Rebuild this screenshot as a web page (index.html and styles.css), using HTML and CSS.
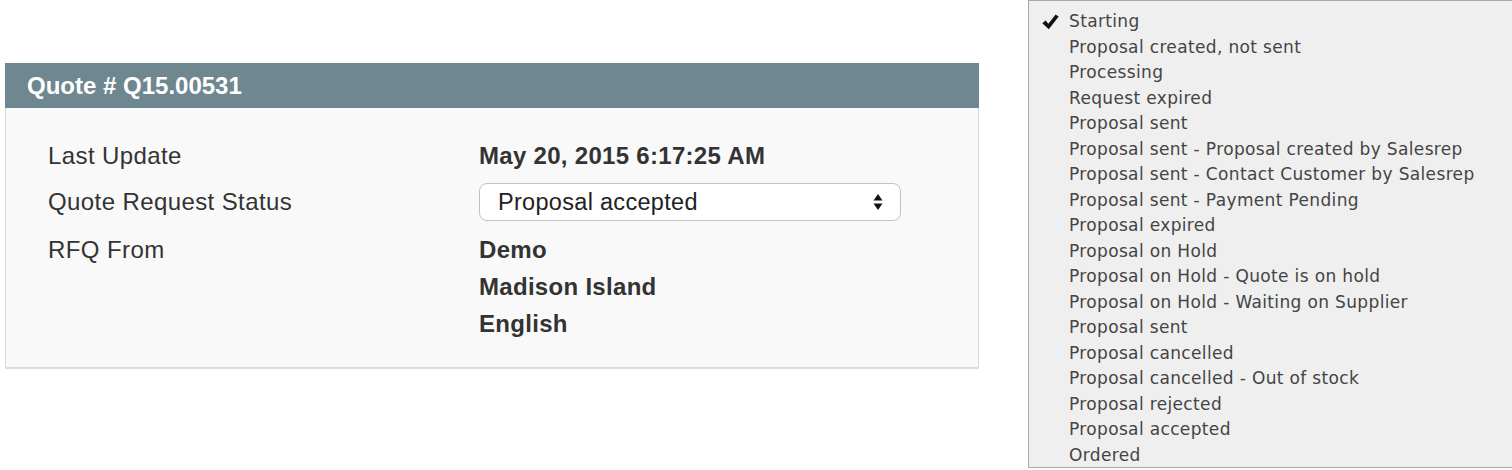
FILE: index.html
```html
<!DOCTYPE html>
<html lang="en">
<head>
    <meta charset="UTF-8">
    <title>Quote Q15.00531</title>
    <link rel="stylesheet" href="styles.css">
</head>
<body>
    <div class="page">
        <div class="quote-box">
            <div class="quote-head">Quote # Q15.00531</div>
            <div class="quote-body">
                <div class="label row-line">Last Update</div>
                <div class="value row-line strong">May 20, 2015 6:17:25 AM</div>

                <div class="label row-line">Quote Request Status</div>
                <div class="value row-line">
                    <div class="fake-select">
                        <span>Proposal accepted</span>
                        <svg class="arrows" width="10" height="18" viewBox="0 0 10 18">
                            <path d="M5 1 L9.5 7.5 L0.5 7.5 Z" fill="#111"/>
                            <path d="M5 17 L9.5 10.5 L0.5 10.5 Z" fill="#111"/>
                        </svg>
                    </div>
                </div>

                <div class="label from">RFQ From</div>
                <div class="value from strong">
                    <div>Demo</div>
                    <div>Madison Island</div>
                    <div>English</div>
                </div>
            </div>
        </div>

        <ul class="status-menu">
            <li class="checked">
                <svg class="check" width="17" height="16" viewBox="0 0 17 16">
                    <path d="M0.3 9.2 L3.6 6.4 L6.4 9.8 L13.6 0.4 L16.7 2.6 L6.8 15.2 Z" fill="#111"/>
                </svg>
                Starting
            </li>
            <li>Proposal created, not sent</li>
            <li>Processing</li>
            <li>Request expired</li>
            <li>Proposal sent</li>
            <li>Proposal sent - Proposal created by Salesrep</li>
            <li>Proposal sent - Contact Customer by Salesrep</li>
            <li>Proposal sent - Payment Pending</li>
            <li>Proposal expired</li>
            <li>Proposal on Hold</li>
            <li>Proposal on Hold - Quote is on hold</li>
            <li>Proposal on Hold - Waiting on Supplier</li>
            <li>Proposal sent</li>
            <li>Proposal cancelled</li>
            <li>Proposal cancelled - Out of stock</li>
            <li>Proposal rejected</li>
            <li>Proposal accepted</li>
            <li>Ordered</li>
        </ul>
    </div>
</body>
</html>
```

FILE: styles.css
```css
body {
    margin: 0;
    background-color: white;
    font-family: "Liberation Sans", Arial, sans-serif;
    overflow: hidden;
}
.page {
    display: flex;
    align-items: flex-start;
    width: 1512px;
    height: 470px;
}
.quote-box {
    width: 974px;
    margin: 63px 0 0 5px;
    flex-shrink: 0;
}
.quote-head {
    height: 45px;
    line-height: 45px;
    padding-left: 22px;
    background-color: #6e8790;
    color: white;
    font-weight: bold;
    font-size: 24px;
}
.quote-body {
    display: grid;
    grid-template-columns: 431px 422px;
    padding: 25px 0 25px 42px;
    background-color: #f9f9f9;
    border: 1px solid #dcdcdc;
    border-top: none;
    border-bottom: 2px solid #dcdcdc;
    color: #333;
    font-size: 24px;
}
.label {
    letter-spacing: 0.4px;
}
.value {
    letter-spacing: 0.3px;
}
.row-line {
    height: 46px;
    display: flex;
    align-items: center;
}
.strong {
    font-weight: bold;
}
.from {
    padding-top: 6px;
    line-height: 37px;
}
.fake-select {
    width: 422px;
    height: 38px;
    box-sizing: border-box;
    display: flex;
    align-items: center;
    justify-content: space-between;
    padding: 0 17px 0 18px;
    background-color: white;
    border: 1px solid #c2c2c2;
    border-radius: 8px;
    color: #222;
    font-size: 23.5px;
    font-weight: normal;
    letter-spacing: 0.3px;
}
.status-menu {
    list-style: none;
    margin: 0 0 0 49px;
    padding: 8px 0 0 0;
    width: 490px;
    height: 468px;
    box-sizing: border-box;
    flex-shrink: 0;
    background-color: #efefef;
    border: 1px solid #a9a9a9;
    font-family: "DejaVu Sans", sans-serif;
    font-size: 17px;
    letter-spacing: 0.35px;
    color: #444;
}
.status-menu li {
    position: relative;
    height: 25.5px;
    line-height: 25.5px;
    padding-left: 40px;
    white-space: nowrap;
}
.check {
    position: absolute;
    left: 13px;
    top: 5px;
}
```
